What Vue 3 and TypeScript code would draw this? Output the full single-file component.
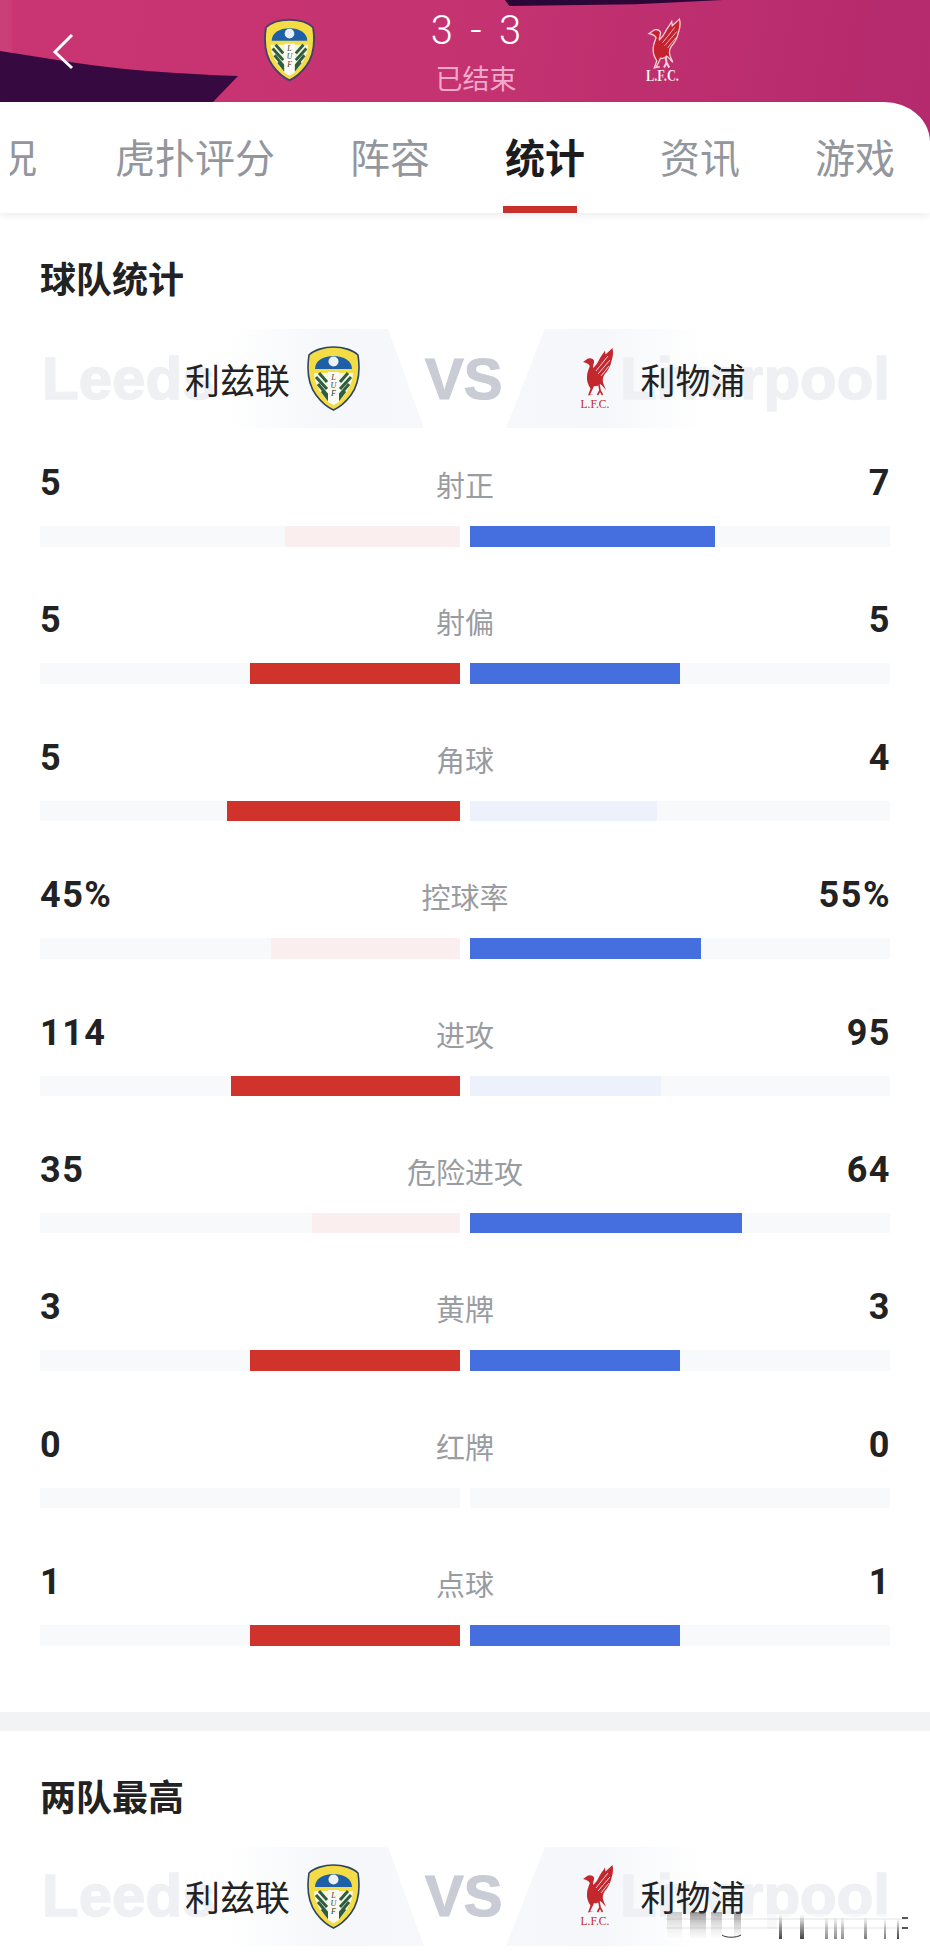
<script setup lang="ts">
interface Stat { label: string; left: string; right: string; l: number; r: number }

const tabs = ['概况', '虎扑评分', '阵容', '统计', '资讯', '游戏']

const stats: Stat[] = [
  { label: '射正', left: '5', right: '7', l: 5, r: 7 },
  { label: '射偏', left: '5', right: '5', l: 5, r: 5 },
  { label: '角球', left: '5', right: '4', l: 5, r: 4 },
  { label: '控球率', left: '45%', right: '55%', l: 45, r: 55 },
  { label: '进攻', left: '114', right: '95', l: 114, r: 95 },
  { label: '危险进攻', left: '35', right: '64', l: 35, r: 64 },
  { label: '黄牌', left: '3', right: '3', l: 3, r: 3 },
  { label: '红牌', left: '0', right: '0', l: 0, r: 0 },
  { label: '点球', left: '1', right: '1', l: 1, r: 1 },
]

const sections = [
  { title: '球队统计', rows: stats },
  { title: '两队最高', rows: [] as Stat[] },
]

const pct = (a: number, b: number) => (a + b === 0 ? 0 : (a / (a + b)) * 100)
const fillStyle = (a: number, b: number) => ({ width: pct(a, b) + '%' })

const shield =
  'M26.5 1C36 1 46 4 51 9C53 22 52 38 44 49C38 57 31 62 26.5 64C22 62 15 57 9 49C1 38 0 22 2 9C7 4 17 1 26.5 1Z'
const dome = 'M8 23C8 15 16 10 26.5 10C37 10 45 15 45 23Z'
const band = 'M7 27H46C46 38 38 52 26.5 59C15 52 7 38 7 27Z'
const stripes = [
  'M9 31L20 43', 'M11 38L21 50', 'M15 45L22 54', 'M12 27L20 36',
  'M44 31L33 43', 'M42 38L32 50', 'M38 45L31 54', 'M41 27L33 36',
]
const bird =
  'M4 14L7.5 11.5C10 9.5 13.5 10 15 12.5C15.6 15 13.6 17 14 20C16.5 18 18.5 15 20 12C21.5 8.5 24 6 26 2.5L26.5 6.5C28.5 4.5 31 2.5 33.5 0C34.5 4 34 9 32.5 13C31.5 18 29 23 25.5 26.5C24 29 23 32 24.5 36L27 42L23 37.5L21 36C19.5 38 17 38.5 15 38L13.5 41.5L11 46.5H14.5L9 47.5L11.5 40.5C9 37 7.5 33 8 28C8.2 24 9.8 21 10.8 18C10 16 8 15 4 14Z'
const birdLeg = 'M20 36.5L21 42.5L23.5 47M21 42.5L18.5 47'
const feathers = ['M17 23L29 8', 'M19 26L31 12', 'M22 28L30 18']
</script>

<template>
  <div class="page">
    <header class="hero">
      <div class="hero-shade"></div>
      <div class="hero-top"></div>
      <svg class="hero-dark" width="240" height="52" viewBox="0 0 240 52">
        <path d="M0 0L70 11C120 19 180 23 238 25L213 51H0Z" fill="#360a40" />
      </svg>
      <svg class="back" width="24" height="38" viewBox="0 0 24 38">
        <path d="M20 2L3 19L20 35" fill="none" stroke="#fff" stroke-width="3" />
      </svg>
      <svg class="crest-hero" width="51" height="64" viewBox="0 0 53 65">
        <path :d="shield" fill="#f4dc45" stroke="#4c3f6e" stroke-width="2" />
        <path :d="dome" fill="#1e60a8" />
        <circle cx="26.5" cy="15.5" r="5" fill="#e8eef6" />
        <path :d="band" fill="#f6f4dc" />
        <path v-for="s in stripes" :key="s" :d="s" stroke="#2e5d3f" stroke-width="3" />
        <path d="M21 26H32V56L26.5 59L21 56Z" fill="#fbfbf4" />
        <text x="26.5" y="34" class="lufc">L</text>
        <text x="26.5" y="42" class="lufc">U</text>
        <text x="26.5" y="50" class="lufc">F</text>
      </svg>
      <div class="score">
        <div class="score-num">3 - 3</div>
        <div class="score-status">已结束</div>
      </div>
      <svg class="lfc-hero" width="36" height="66" viewBox="0 0 35 62">
        <path :d="bird" fill="#c3222e" stroke="#f6cfd6" stroke-width="1.3" />
        <path :d="birdLeg" fill="none" stroke="#f6cfd6" stroke-width="2" />
        <path v-for="f in feathers" :key="f" :d="f" stroke="#f6cfd6" stroke-width="0.8" />
        <text x="17" y="60.5" class="lfc-text lfc-text-hero" textLength="32" lengthAdjust="spacingAndGlyphs">L.F.C.</text>
      </svg>
    </header>

    <nav class="tabs-panel">
      <div class="tabs">
        <div v-for="t in tabs" :key="t" class="tab" :class="{ active: t === '统计' }">{{ t }}</div>
      </div>
      <div class="tabs-fade"></div>
    </nav>

    <template v-for="(sec, i) in sections" :key="sec.title">
      <div v-if="i > 0" class="divider"></div>
      <section class="section">
        <h2 class="title">{{ sec.title }}</h2>
        <div class="teams">
          <div class="plate plate-left"></div>
          <div class="plate plate-right"></div>
          <span class="mark mark-left">Leeds</span>
          <span class="mark mark-right">Liverpool</span>
          <div class="team team-left">
            <span class="team-name">利兹联</span>
            <svg class="crest" width="53" height="65" viewBox="0 0 53 65">
              <path :d="shield" fill="#f4dc45" stroke="#2d4560" stroke-width="1.6" />
              <path :d="dome" fill="#1e60a8" />
              <circle cx="26.5" cy="15.5" r="5" fill="#eef2f7" />
              <path :d="band" fill="#f8f7e6" />
              <path v-for="s in stripes" :key="s" :d="s" stroke="#2e5d3f" stroke-width="3" />
              <path d="M21 26H32V56L26.5 59L21 56Z" fill="#fbfbf4" />
              <text x="26.5" y="34" class="lufc">L</text>
              <text x="26.5" y="42" class="lufc">U</text>
              <text x="26.5" y="50" class="lufc">F</text>
            </svg>
          </div>
          <span class="vs">VS</span>
          <div class="team team-right">
            <svg class="lfc" width="35" height="62" viewBox="0 0 35 62">
              <path :d="bird" fill="#c3282e" />
              <path :d="birdLeg" fill="none" stroke="#c3282e" stroke-width="1.6" />
              <path v-for="f in feathers" :key="f" :d="f" stroke="#fff" stroke-width="0.8" />
              <text x="16" y="60" class="lfc-text">L.F.C.</text>
            </svg>
            <span class="team-name">利物浦</span>
          </div>
        </div>
        <div v-if="sec.rows.length" class="stats">
          <div v-for="row in sec.rows" :key="row.label" class="row">
            <div class="row-head">
              <span class="val">{{ row.left }}</span>
              <span class="label">{{ row.label }}</span>
              <span class="val val-right">{{ row.right }}</span>
            </div>
            <div class="bars">
              <div class="bar bar-left">
                <div class="fill" :class="row.l >= row.r ? 'red' : 'red-pale'" :style="fillStyle(row.l, row.r)"></div>
              </div>
              <div class="bar">
                <div class="fill" :class="row.r >= row.l ? 'blue' : 'blue-pale'" :style="fillStyle(row.r, row.l)"></div>
              </div>
            </div>
          </div>
        </div>
      </section>
    </template>

    <svg class="smear" width="246" height="32" viewBox="0 0 246 32">
      <defs>
        <linearGradient id="smearDark" x1="0" y1="0" x2="0" y2="1">
          <stop offset="0" stop-color="#222" stop-opacity="0" />
          <stop offset="0.55" stop-color="#333" stop-opacity="0.55" />
          <stop offset="1" stop-color="#222" stop-opacity="0.85" />
        </linearGradient>
        <linearGradient id="smearFade" x1="0" y1="0" x2="0" y2="1">
          <stop offset="0" stop-color="#444" stop-opacity="0.55" />
          <stop offset="1" stop-color="#aaa" stop-opacity="0.05" />
        </linearGradient>
      </defs>
      <rect x="0" y="3" width="246" height="26" fill="#fff" opacity="0.55" />
      <rect x="1" y="1" width="15" height="26" fill="url(#smearFade)" opacity="0.5" />
      <rect x="24" y="1" width="16" height="26" fill="url(#smearFade)" />
      <rect x="45" y="1" width="11" height="26" fill="url(#smearFade)" opacity="0.7" />
      <rect x="68" y="1" width="7" height="26" fill="url(#smearFade)" />
      <path d="M56 24C60 27 70 27 75 24" fill="none" stroke="#333" stroke-width="1" />
      <rect x="113" y="4" width="3" height="24" fill="url(#smearDark)" />
      <rect x="134" y="4" width="4" height="24" fill="url(#smearDark)" />
      <rect x="159" y="6" width="3" height="22" fill="url(#smearDark)" opacity="0.6" />
      <rect x="168" y="6" width="3" height="22" fill="url(#smearDark)" opacity="0.6" />
      <rect x="175" y="6" width="3" height="22" fill="url(#smearDark)" opacity="0.6" />
      <rect x="198" y="6" width="3" height="22" fill="url(#smearDark)" opacity="0.7" />
      <rect x="218" y="8" width="2" height="20" fill="url(#smearDark)" opacity="0.7" />
      <rect x="231" y="8" width="2" height="20" fill="url(#smearDark)" />
      <path d="M0 8H240M0 17H240" stroke="#888" stroke-width="1.5" opacity="0.15" />
      <path d="M236 7H242M236 17H242" stroke="#222" stroke-width="1.5" />
    </svg>
  </div>
</template>

<style scoped>
.page {
  position: relative;
  width: 930px;
  height: 1960px;
  overflow: hidden;
  background: #fff;
  font-family: "Noto Sans CJK SC", "Noto Sans", sans-serif;
  color: #222;
}
.hero {
  position: relative;
  display: flex;
  align-items: flex-start;
  height: 150px;
  margin-bottom: -48px;
  overflow: hidden;
  background: linear-gradient(100deg, #c93571 0%, #c63371 45%, #b42a6d 100%);
}
.hero-shade {
  position: absolute;
  left: 0;
  top: 0;
  width: 12px;
  height: 150px;
  background: rgba(255, 255, 255, 0.05);
}
.hero-top {
  position: absolute;
  left: 505px;
  top: 0;
  width: 218px;
  height: 6px;
  background: #2d0638;
  clip-path: polygon(0 0, 100% 0, 60% 70%, 2% 100%);
}
.hero-dark {
  position: absolute;
  left: 0;
  top: 51px;
}
.back {
  position: relative;
  margin: 33px 0 0 52px;
}
.crest-hero {
  position: relative;
  margin: 18px 0 0 188px;
  flex: none;
}
.score {
  position: relative;
  width: 200px;
  margin-left: 61px;
  text-align: center;
  flex: none;
}
.score-num {
  margin-top: 8px;
  height: 46px;
  font-family: Roboto, sans-serif;
  font-weight: 300;
  font-size: 40px;
  line-height: 46px;
  word-spacing: 7.5px;
  color: #fff;
  white-space: pre;
}
.score-status {
  font-size: 27px;
  line-height: 34px;
  margin-top: 7px;
  color: #f3a9cb;
}
.lfc-hero {
  position: relative;
  margin: 18px 0 0 69px;
  flex: none;
}
.lfc-text {
  font-family: "Liberation Serif", serif;
  font-size: 11.5px;
  text-anchor: middle;
  fill: #c3282e;
}
.lfc-text-hero {
  font-size: 16px;
  font-weight: 700;
  fill: #fff;
  stroke: #c3222e;
  stroke-width: 0.2px;
}
.lufc {
  font-family: "Liberation Serif", serif;
  font-style: italic;
  font-size: 8px;
  text-anchor: middle;
  fill: #2c3a2c;
}
.tabs-panel {
  position: relative;
  height: 111px;
  background: #fff;
  border-top-right-radius: 46px 40px;
  box-shadow: 0 3px 7px rgba(0, 0, 0, 0.07);
  overflow: hidden;
}
.tabs {
  display: flex;
  gap: 75px;
  margin-left: -43px;
  white-space: nowrap;
}
.tab {
  position: relative;
  flex: none;
  font-size: 40px;
  line-height: 108px;
  height: 111px;
  color: #93969c;
}
.tab:first-child {
  margin-right: 3px;
}
.tab.active {
  color: #1c1c1e;
  font-weight: 700;
}
.tab.active::after {
  content: "";
  position: absolute;
  left: -2px;
  width: 74px;
  bottom: 0;
  height: 7px;
  background: #c9302c;
}
.tabs-fade {
  position: absolute;
  left: 0;
  top: 0;
  width: 10px;
  height: 111px;
  background: #fff;
}
.divider {
  height: 19px;
  background: #f2f3f5;
}
.section {
  padding-top: 39px;
}
.title {
  margin: 0;
  padding-left: 40px;
  font-size: 36px;
  font-weight: 700;
  line-height: 50px;
  color: #222;
}
.teams {
  position: relative;
  display: flex;
  align-items: center;
  height: 99px;
  margin: 27px 40px 0;
}
.plate {
  position: absolute;
  top: 0;
  bottom: 0;
}
.plate-left {
  left: 190px;
  width: 194px;
  background: linear-gradient(90deg, rgba(245, 247, 250, 0), #f5f7fa 50%, #f6f8fb);
  clip-path: polygon(0 0, 81.5% 0, 100% 100%, 0 100%);
}
.plate-right {
  left: 466px;
  width: 194px;
  background: linear-gradient(270deg, rgba(245, 247, 250, 0), #f5f7fa 50%, #f6f8fb);
  clip-path: polygon(20% 0, 100% 0, 100% 100%, 0 100%);
}
.mark {
  position: absolute;
  top: 50%;
  transform: translateY(-50%);
  font-family: "Liberation Sans", sans-serif;
  font-weight: 700;
  font-size: 60px;
  line-height: 70px;
  color: #eef0f4;
  -webkit-text-stroke: 1.5px #eef0f4;
}
.mark-left {
  left: 2px;
}
.mark-right {
  right: 0;
}
.team {
  position: relative;
  display: flex;
  align-items: center;
}
.team-left {
  margin-left: 145px;
}
.team-right {
  margin-left: 77px;
}
.team-name {
  font-size: 35px;
  line-height: 50px;
  color: #222;
  white-space: nowrap;
}
.crest {
  margin-left: 17px;
  flex: none;
}
.lfc {
  margin-right: 26px;
  flex: none;
}
.vs {
  position: relative;
  margin-left: 65px;
  font-family: "Liberation Sans", sans-serif;
  font-weight: 700;
  font-size: 58px;
  line-height: 70px;
  color: #c9ccd5;
  -webkit-text-stroke: 1.2px #c9ccd5;
}
.stats {
  margin-top: 32px;
  padding-bottom: 15.4px;
}
.row {
  height: 137.4px;
  padding: 0 40px;
}
.row-head {
  display: grid;
  grid-template-columns: 1fr auto 1fr;
  align-items: start;
  height: 50px;
}
.val {
  font-family: Roboto, sans-serif;
  font-weight: 700;
  font-size: 36px;
  line-height: 47px;
  letter-spacing: 1.5px;
  color: #222;
}
.val-right {
  text-align: right;
  margin-right: -1px;
}
.label {
  font-size: 29px;
  line-height: 48px;
  color: #999ca1;
}
.bars {
  display: flex;
  gap: 10px;
  margin-top: 16px;
}
.bar {
  flex: 1;
  display: flex;
  height: 20.5px;
  background: #f8f9fb;
}
.bar-left {
  justify-content: flex-end;
}
.fill {
  height: 100%;
}
.red {
  background: #d0322c;
}
.red-pale {
  background: #fbeeee;
}
.blue {
  background: #456ede;
}
.blue-pale {
  background: #edf1fb;
}
.smear {
  position: absolute;
  left: 666px;
  top: 1911px;
}
</style>
